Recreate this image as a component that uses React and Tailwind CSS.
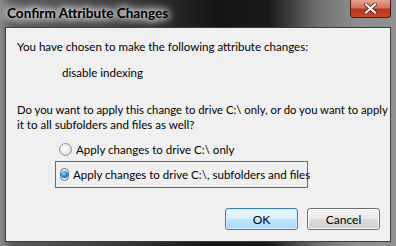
export default function App() {
  const font = { fontFamily: 'Lato, "Open Sans", sans-serif' };
  return (
    <div
      className="w-[396px] h-[246px] flex flex-col overflow-hidden"
      style={{ ...font }}
    >
      <div className="w-[396px] h-[246px] flex flex-col bg-[linear-gradient(90deg,#8a8a8a_0%,#5a5a5a_3%,#3a3a3a_30%,#151515_55%,#1a1a1a_68%,#6e6e6e_80%,#8e8e8e_90%,#909090_100%)]">
        <div className="h-[27px] shrink-0 flex items-start relative">
          <div className="pl-[7px] pt-[5px] text-[13.6px] font-bold text-black leading-[17px] whitespace-nowrap [text-shadow:0_0_6px_#fff,0_0_10px_#fff,0_0_14px_#fff]">
            Confirm Attribute Changes
          </div>
          <div className="absolute right-[5px] top-0 w-[41px] h-[18px] rounded-b-[4px] border border-t-0 border-[#4a1a12] bg-[linear-gradient(180deg,#e8a38f_0%,#d3705a_45%,#b8351b_55%,#c84a2a_100%)] flex items-center justify-center">
            <svg width="13" height="11" viewBox="0 0 13 11">
              <path d="M2 1.5 L11 9.5 M11 1.5 L2 9.5" stroke="#3a1a14" strokeWidth="3.6" strokeLinecap="square" />
              <path d="M2 1.5 L11 9.5 M11 1.5 L2 9.5" stroke="#ffffff" strokeWidth="2.2" strokeLinecap="square" />
            </svg>
          </div>
        </div>
        <div className="ml-[5px] w-[386px] h-[215px] bg-[#f0f0f0] border border-[#3c3c3c] text-[11.55px] leading-[15px] text-black flex flex-col whitespace-nowrap">
          <div className="pl-[11px] mt-[11px] h-[15px]">You have chosen to make the following attribute changes:</div>
          <div className="pl-[56px] mt-[11px] h-[15px]">disable indexing</div>
          <div className="pl-[11px] mt-[22px] h-[15px] text-[11.3px]">Do you want to apply this change to drive C:\ only, or do you want to apply</div>
          <div className="pl-[11px] h-[15px]">it to all subfolders and files as well?</div>
          <div className="pl-[49px] mt-[9px] flex flex-col">
            <div className="flex items-center gap-[4px] pl-[4px] h-[17px]">
              <span className="w-[13px] h-[13px] rounded-full border border-[#8e8f8f] bg-[radial-gradient(circle_at_40%_40%,#ffffff_0%,#e6e6e6_60%,#d0d0d0_100%)]" />
              <span>Apply changes to drive C:\ only</span>
            </div>
            <div className="mt-[3px] w-[253px] h-[27px] border border-[#f03040] flex items-center gap-[4px] pl-[4px]">
              <span className="w-[13px] h-[13px] rounded-full border border-[#3c7fb1] bg-[#f4f4f4] flex items-center justify-center">
                <span className="w-[7px] h-[7px] rounded-full bg-[radial-gradient(circle_at_40%_35%,#9cd4ff_0%,#2a75c0_55%,#0c3e78_100%)]" />
              </span>
              <span>Apply changes to drive C:\, subfolders and files</span>
            </div>
          </div>
          <div className="mt-auto mb-[11px] flex justify-end gap-[9px] pr-[10px]">
            <button className="w-[73px] h-[22px] rounded-[3px] border border-[#3c7fb1] bg-[linear-gradient(180deg,#eaf6fd_0%,#d9f0fc_50%,#bee6fd_51%,#a7d9f5_100%)] text-[12px] text-black shadow-[inset_0_0_0_1px_#d8eef9]">
              OK
            </button>
            <button className="w-[73px] h-[22px] rounded-[3px] border border-[#707070] bg-[linear-gradient(180deg,#f2f2f2_0%,#ebebeb_50%,#dddddd_51%,#cfcfcf_100%)] text-[12px] text-black shadow-[inset_0_0_0_1px_#fcfcfc]">
              Cancel
            </button>
          </div>
        </div>
      </div>
    </div>
  );
}
